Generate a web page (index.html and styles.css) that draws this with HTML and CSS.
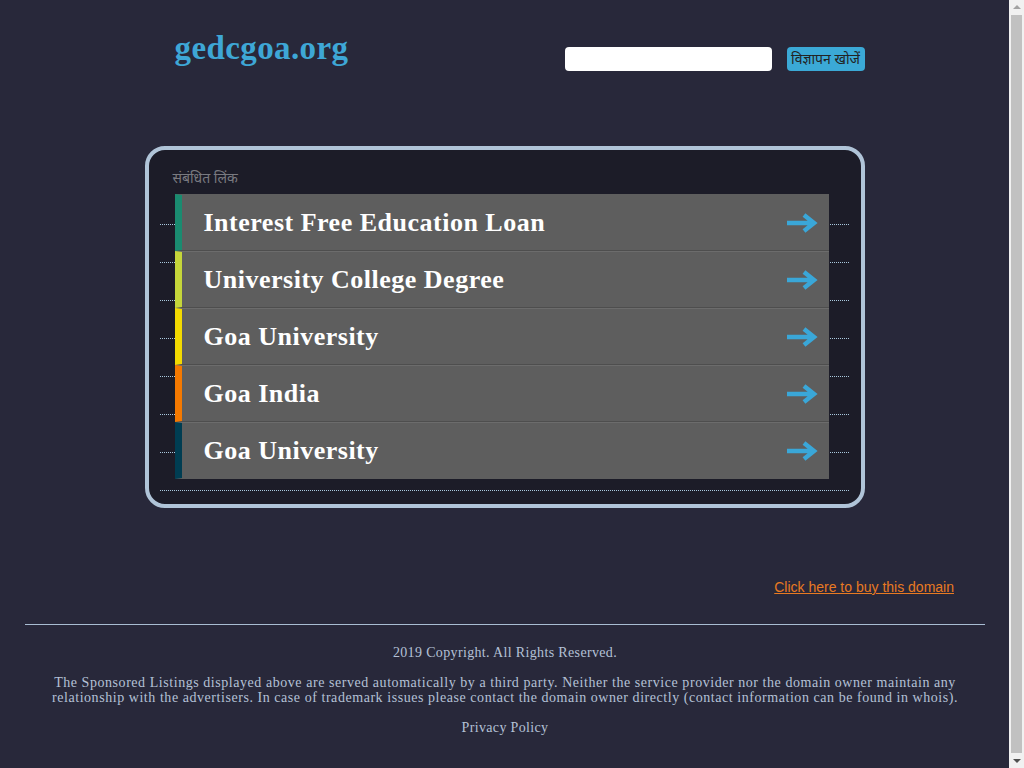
FILE: index.html
```html
<!DOCTYPE html>
<html lang="hi">
<head>
<meta charset="utf-8">
<title>gedcgoa.org</title>
<link rel="stylesheet" href="styles.css">
</head>
<body>
<div class="page">
  <header class="header">
    <a class="logo" href="#">gedcgoa.org</a>
    <form class="search">
      <input class="search-input" type="text">
      <button class="search-btn" type="button">विज्ञापन खोजें</button>
    </form>
  </header>

  <main class="box">
    <div class="box-title">संबंधित लिंक</div>
    <div class="links">
      <div class="lines">
        <div class="line first"></div>
        <div class="line"></div>
        <div class="line"></div>
        <div class="line"></div>
        <div class="line"></div>
        <div class="line"></div>
        <div class="line"></div>
        <div class="line"></div>
      </div>
      <ul class="rows">
        <li class="row c1"><span class="row-text">Interest Free Education Loan</span><svg class="arrow" viewBox="0 0 32 20" width="32" height="20"><path d="M1 10H27M18 2L28 10L18 18" fill="none" stroke="#3aa7d8" stroke-width="4.5"/></svg></li>
        <li class="row c2"><span class="row-text">University College Degree</span><svg class="arrow" viewBox="0 0 32 20" width="32" height="20"><path d="M1 10H27M18 2L28 10L18 18" fill="none" stroke="#3aa7d8" stroke-width="4.5"/></svg></li>
        <li class="row c3"><span class="row-text">Goa University</span><svg class="arrow" viewBox="0 0 32 20" width="32" height="20"><path d="M1 10H27M18 2L28 10L18 18" fill="none" stroke="#3aa7d8" stroke-width="4.5"/></svg></li>
        <li class="row c4"><span class="row-text">Goa India</span><svg class="arrow" viewBox="0 0 32 20" width="32" height="20"><path d="M1 10H27M18 2L28 10L18 18" fill="none" stroke="#3aa7d8" stroke-width="4.5"/></svg></li>
        <li class="row c5"><span class="row-text">Goa University</span><svg class="arrow" viewBox="0 0 32 20" width="32" height="20"><path d="M1 10H27M18 2L28 10L18 18" fill="none" stroke="#3aa7d8" stroke-width="4.5"/></svg></li>
      </ul>
    </div>
  </main>

  <div class="buy"><a href="#">Click here to buy this domain</a></div>

  <footer class="footer">
    <p class="copy">2019 Copyright. All Rights Reserved.</p>
    <p class="disclaimer">The Sponsored Listings displayed above are served automatically by a third party. Neither the service provider nor the domain owner maintain any relationship with the advertisers. In case of trademark issues please contact the domain owner directly (contact information can be found in whois).</p>
    <p class="privacy"><a href="#">Privacy Policy</a></p>
  </footer>
</div>
<div class="scrollbar" aria-hidden="true">
  <div class="sb-up"></div>
  <div class="sb-thumb"></div>
  <div class="sb-down"></div>
</div>
</body>
</html>
```

FILE: styles.css
```css
html, body {
  margin: 0;
  padding: 0;
}
body {
  background: #28283a;
  font-family: "Liberation Serif", "DejaVu Serif", serif;
  color: #b4c1d6;
}
.page {
  width: 1009px;
  padding-bottom: 30px;
}
.header {
  width: 690px;
  margin: 0 auto;
  padding: 30px 0 0 30px;
  display: flex;
  justify-content: space-between;
  align-items: flex-start;
  height: 116px;
}
.logo {
  font-family: "Liberation Serif", serif;
  font-weight: bold;
  font-size: 33px;
  letter-spacing: 0.4px;
  color: #3ea7d6;
  text-decoration: none;
  line-height: 36px;
}
.search {
  display: flex;
  gap: 15px;
  margin: 17px 0 0;
}
.search-input {
  width: 207px;
  height: 24px;
  box-sizing: border-box;
  border: none;
  border-radius: 4px;
  background: #fff;
  padding: 0 6px;
  margin: 0;
}
.search-btn {
  width: 78px;
  height: 24px;
  border: none;
  border-radius: 4px;
  background: #3ba9d6;
  color: #222;
  font-family: "Noto Sans", "Liberation Sans", sans-serif;
  font-size: 14px;
  padding: 0;
  margin: 0;
  line-height: 24px;
}
.box {
  width: 720px;
  box-sizing: border-box;
  margin: 0 auto;
  border: 4px solid #b0c4d8;
  border-radius: 20px;
  background: #1c1c28;
  padding: 18px 12px 13px 11px;
}
.box-title {
  font-family: "Noto Sans", "Liberation Sans", sans-serif;
  font-size: 14px;
  color: #7a7a80;
  line-height: 20px;
  padding-left: 13px;
  margin-bottom: 6px;
}
.links {
  display: grid;
}
.lines, .rows {
  grid-area: 1 / 1;
}
.line {
  height: 38px;
  box-sizing: border-box;
  border-bottom: 1px dotted #a9c9de;
}
.line.first {
  height: 31px;
}
.rows {
  list-style: none;
  margin: 0 0 0 15px;
  padding: 0;
  width: 654px;
  align-self: start;
}
.row {
  height: 57px;
  box-sizing: border-box;
  background: #5e5e5e;
  border-left: 7px solid #1a8a6e;
  border-top: 1px solid #6c6c6c;
  border-bottom: 1px solid #4e4e4e;
  display: flex;
  align-items: center;
  justify-content: space-between;
  padding: 0 11px 0 22px;
}
.row.c1 { border-left-color: #1a8b70; border-top-color: #5e5e5e; }
.row.c2 { border-left-color: #c5d63a; }
.row.c3 { border-left-color: #f3da00; }
.row.c4 { border-left-color: #f57900; }
.row.c5 { border-left-color: #003d52; border-bottom-color: #5e5e5e; }
.row-text {
  font-family: "Liberation Serif", serif;
  font-weight: bold;
  font-size: 26px;
  letter-spacing: 0.5px;
  color: #fff;
}
.arrow {
  display: block;
}
.buy {
  margin: 71px 55px 0 0;
  text-align: right;
  font-family: "Liberation Sans", Arial, sans-serif;
  font-size: 14px;
  line-height: 16px;
}
.buy a {
  color: #e87a22;
}
.footer {
  margin: 29px 24px 0 25px;
  border-top: 1px solid #a9bdd2;
  text-align: center;
  font-size: 14px;
  letter-spacing: 0.35px;
  line-height: 15px;
  padding-top: 20px;
}
.footer p {
  margin: 0;
}
.copy {
  margin-bottom: 15px !important;
}
.disclaimer {
  padding: 0 20px;
  letter-spacing: 0.55px;
  margin-bottom: 15px !important;
}
.privacy a {
  color: #b4c1d6;
  text-decoration: none;
}
.scrollbar {
  position: fixed;
  top: 0;
  right: 0;
  width: 15px;
  height: 100vh;
  background: #f1f1f1;
  display: flex;
  flex-direction: column;
  align-items: center;
}
.sb-up, .sb-down {
  width: 0;
  height: 0;
  border-left: 4px solid transparent;
  border-right: 4px solid transparent;
  flex: none;
}
.sb-up {
  border-bottom: 4px solid #a3a3a3;
  margin: 5px 0 6px;
}
.sb-thumb {
  width: 11px;
  flex: 1;
  background: #c1c1c1;
}
.sb-down {
  border-top: 4px solid #505050;
  margin: 6px 0 5px;
}
```
